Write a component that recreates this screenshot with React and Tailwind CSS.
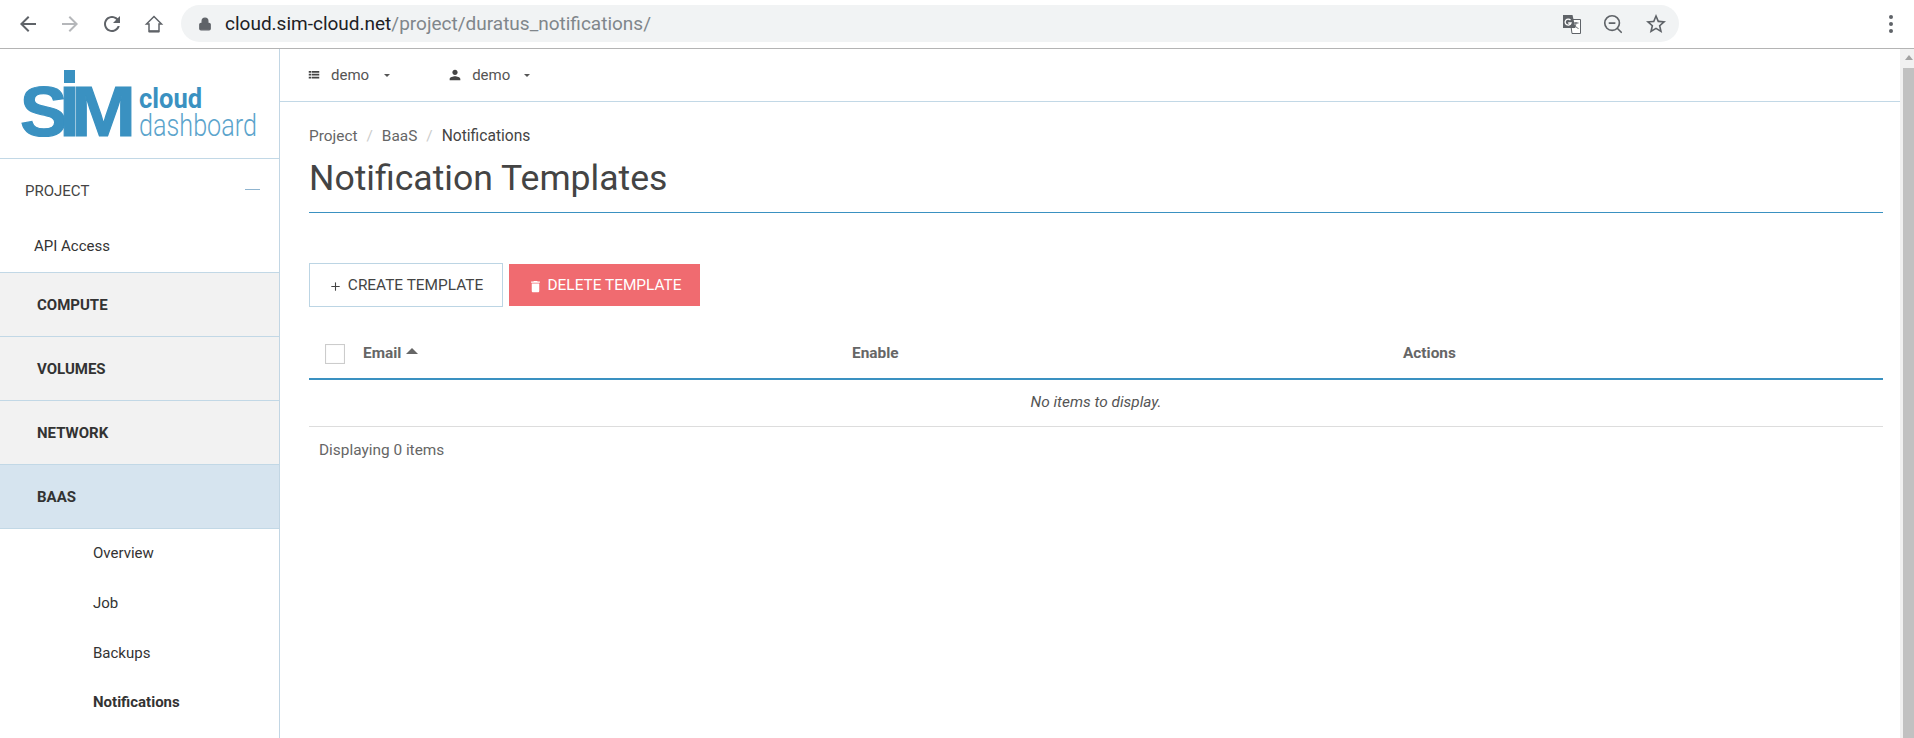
import React from 'react';
import { Lock, ZoomOut, Plus } from 'lucide-react';

function Mi({ d, size = 24, className = '' }) {
  return (
    <svg width={size} height={size} viewBox="0 0 24 24" fill="currentColor" className={`shrink-0 ${className}`}>
      <path d={d} />
    </svg>
  );
}

const icons = {
  back: 'M20 11H7.83l5.59-5.59L12 4l-8 8 8 8 1.41-1.41L7.83 13H20v-2z',
  forward: 'M12 4l-1.41 1.41L16.17 11H4v2h12.17l-5.58 5.59L12 20l8-8z',
  reload: 'M17.65 6.35C16.2 4.9 14.21 4 12 4c-4.42 0-7.99 3.58-7.99 8s3.57 8 7.99 8c3.73 0 6.84-2.55 7.73-6h-2.08c-.82 2.33-3.04 4-5.65 4-3.31 0-6-2.69-6-6s2.69-6 6-6c1.66 0 3.14.69 4.22 1.78L13 11h7V4l-2.35 2.35z',
  star: 'M22 9.24l-7.19-.62L12 2 9.19 8.63 2 9.24l5.46 4.73L5.82 21 12 17.27 18.18 21l-1.63-7.03L22 9.24zM12 15.4l-3.76 2.27 1-4.28-3.32-2.88 4.38-.38L12 6.1l1.71 4.04 4.38.38-3.32 2.88 1 4.28L12 15.4z',
  person: 'M12 12c2.21 0 4-1.79 4-4s-1.79-4-4-4-4 1.79-4 4 1.79 4 4 4zm0 2c-2.67 0-8 1.34-8 4v2h16v-2c0-2.66-5.33-4-8-4z',
  trash: 'M6 19c0 1.1.9 2 2 2h8c1.1 0 2-.9 2-2V7H6v12zM19 4h-3.5l-1-1h-5l-1 1H5v2h14V4z',
  list: 'M3 5h4v3H3zM8 5h13v3H8zM3 10h4v3H3zM8 10h13v3H8zM3 15h4v3H3zM8 15h13v3H8z',
};

function HomeIcon() {
  return (
    <svg width="24" height="24" viewBox="0 0 24 24" fill="none" stroke="currentColor" className="shrink-0">
      <path d="M12 4.5 4.5 12H7v7.5h10V12h2.5z" strokeWidth="1.5" strokeLinejoin="miter" />
      <path d="M7 19.3h10" strokeWidth="2.2" />
    </svg>
  );
}

function TranslateIcon() {
  return (
    <svg width="20" height="20" viewBox="0 0 20 20">
      <path d="M8 5.5h10.5v14H10z" fill="#fff" stroke="#5f6368" strokeWidth="1" />
      <path d="M1 1h9.5l3 13H1z" fill="#5f6368" />
      <path d="M8.5 6.2A3 3 0 1 0 9 9H6.2" fill="none" stroke="#fff" strokeWidth="1.3" />
      <path d="M11.5 9h5M14 8v1c0 2-1.5 4-3 5M12.5 11c.8 1.5 2.5 3 4 3.5" fill="none" stroke="#5f6368" strokeWidth="1" />
    </svg>
  );
}

function Logo() {
  const sim = { fontFamily: 'Liberation Sans', fontWeight: 700, fontSize: 71, fill: '#3a91c1', stroke: '#3a91c1', strokeWidth: 1.2 };
  return (
    <svg width="279" height="109" viewBox="0 49 279 109" className="block">
      <rect x="64" y="70" width="11" height="13" fill="#3a91c1" />
      <text x="20" y="136" {...sim}>S</text>
      <text x="59.5" y="136" {...sim}>I</text>
      <text x="71" y="136" textLength="65" lengthAdjust="spacingAndGlyphs" {...sim}>M</text>
      <text x="139" y="108" fontFamily="Roboto" fontWeight="700" fontSize="28" fill="#3a91c1" textLength="63" lengthAdjust="spacingAndGlyphs">cloud</text>
      <text x="139" y="136" fontFamily="Roboto" fontWeight="300" fontSize="32" fill="#5ba4cc" textLength="118" lengthAdjust="spacingAndGlyphs">dashboard</text>
    </svg>
  );
}

function Browser() {
  return (
    <div className="h-[49px] flex items-center border-b border-[#b4b4b4] bg-white shrink-0 relative">
      <div className="w-[181px] flex items-center pl-[16px] gap-[18px] text-[#5f6368]">
        <Mi d={icons.back} />
        <Mi d={icons.forward} className="text-[#b5b7ba]" />
        <Mi d={icons.reload} />
        <HomeIcon />
      </div>
      <div className="w-[1498px] h-[37px] rounded-full bg-[#f1f3f4] flex items-center pl-[17px] pr-[11px] mb-[1px]">
        <Lock size={14} fill="#5f6368" stroke="#5f6368" strokeWidth={2} />
        <div className="ml-[13px] text-[19px] text-[#80868b] leading-none">
          <span className="text-[#202124]">cloud.sim-cloud.net</span>/project/duratus_notifications/
        </div>
        <div className="ml-auto flex items-center gap-[20px] text-[#5f6368]">
          <TranslateIcon />
          <ZoomOut size={22} strokeWidth={1.8} />
          <Mi d={icons.star} />
        </div>
      </div>
      <div className="ml-auto mr-[21px] flex flex-col gap-[3px]">
        <div className="w-[4px] h-[4px] rounded-full bg-[#5f6368]" />
        <div className="w-[4px] h-[4px] rounded-full bg-[#5f6368]" />
        <div className="w-[4px] h-[4px] rounded-full bg-[#5f6368]" />
      </div>
    </div>
  );
}

function Section({ label, active }) {
  return (
    <div className={`h-[64px] flex items-center pl-[37px] pt-[2px] border-b border-[#c2d8e6] text-[15px] font-bold text-[#333] ${active ? 'bg-[#d6e4ef]' : 'bg-[#f2f2f2]'}`}>
      {label}
    </div>
  );
}

function Sidebar() {
  const subs = ['Overview', 'Job', 'Backups'];
  return (
    <div className="w-[280px] shrink-0 border-r border-[#c2d6e4] text-[15px] text-[#333]">
      <div className="h-[110px] border-b border-[#c2d8e6]">
        <Logo />
      </div>
      <div className="h-[64px] flex items-center justify-between pl-[25px] pr-[19px]">
        <span className="text-[#444]">PROJECT</span>
        <span className="w-[15px] h-[1px] bg-[#8fb4cf] mb-[4px]" />
      </div>
      <div className="h-[50px] pb-[2px] flex items-center pl-[34px] border-b border-[#c2d8e6]">API Access</div>
      <Section label="COMPUTE" />
      <Section label="VOLUMES" />
      <Section label="NETWORK" />
      <Section label="BAAS" active />
      <div className="pl-[93px] -mt-[1px]">
        {subs.map(s => (
          <div key={s} className="h-[50px] flex items-center">{s}</div>
        ))}
        <div className="h-[48px] flex items-center font-bold">Notifications</div>
      </div>
    </div>
  );
}

function Main() {
  return (
    <div className="flex-1 min-w-0">
      <div className="h-[53px] border-b border-[#c2d8e6] flex items-center pl-[27px] text-[15px] text-[#555]">
        <Mi d={icons.list} size={14} className="text-[#444]" />
        <span className="ml-[10px]">demo</span>
        <span className="ml-[15px] border-x-[3px] border-x-transparent border-t-[3px] border-t-[#555]" />
        <Mi d={icons.person} size={16} className="text-[#444] ml-[57px]" />
        <span className="ml-[9px]">demo</span>
        <span className="ml-[14px] border-x-[3px] border-x-transparent border-t-[3px] border-t-[#555]" />
      </div>
      <div className="pl-[29px] pr-[17px]">
        <div className="pt-[23px] text-[15.4px] leading-[22px] text-[#666] flex">
          <span>Project</span>
          <span className="mx-[9px] text-[#ccc]">/</span>
          <span>BaaS</span>
          <span className="mx-[9px] text-[#ccc]">/</span>
          <span className="text-[#444] text-[15.6px]">Notifications</span>
        </div>
        <div className="h-[66px] flex items-center border-b border-[#3a91c1] text-[35.6px] text-[#444] pb-[2px]">
          Notification Templates
        </div>
        <div className="mt-[50px] flex items-center gap-[6px] text-[15.4px]">
          <button className="w-[194px] h-[44px] pt-[2px] border border-[#bcd5e4] bg-white text-[#444] flex items-center justify-center gap-[6px]">
            <Plus size={13} strokeWidth={2} />
            CREATE TEMPLATE
          </button>
          <button className="w-[191px] h-[42px] pt-[2px] bg-[#f06b70] text-white flex items-center justify-center gap-[5px]">
            <Mi d={icons.trash} size={15} />
            DELETE TEMPLATE
          </button>
        </div>
        <div className="h-[73px] flex items-center border-b-2 border-[#3a91c1] text-[15.4px] font-bold text-[#666] pt-[23px]">
          <span className="ml-[16px] w-[20px] h-[20px] border border-[#ccc] shadow-[inset_0_0_1px_#ddd] shrink-0" />
          <div className="ml-[18px] w-[489px] flex items-center gap-[5px]">
            Email
            <span className="mb-[5px] border-x-[6px] border-x-transparent border-b-[6px] border-b-[#666]" />
          </div>
          <div className="w-[551px]">Enable</div>
          <div>Actions</div>
        </div>
        <div className="h-[47px] flex items-center justify-center border-b border-[#ddd] text-[15.4px] italic text-[#555]">
          No items to display.
        </div>
        <div className="h-[47px] flex items-center pl-[10px] text-[15.4px] text-[#666]">Displaying 0 items</div>
      </div>
    </div>
  );
}

export default function App() {
  return (
    <div className="w-[1914px] h-[738px] overflow-hidden bg-white flex flex-col font-['Roboto',sans-serif]">
      <Browser />
      <div className="flex flex-1 min-h-0">
        <Sidebar />
        <Main />
        <div className="w-[14px] shrink-0 bg-[#f1f1f1] flex flex-col items-center">
          <span className="mt-[6px] ml-[3px] border-x-[4px] border-x-transparent border-b-[5px] border-b-[#a3a3a3]" />
          <div className="mt-[8px] w-[11px] ml-[3px] flex-1 bg-[#c1c1c1]" />
        </div>
      </div>
    </div>
  );
}
